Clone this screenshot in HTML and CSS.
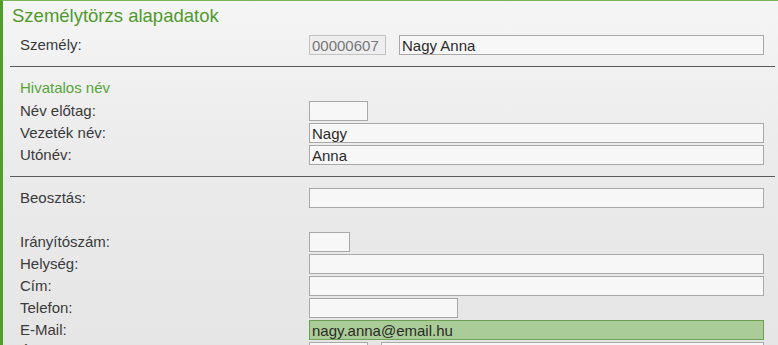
FILE: index.html
```html
<!DOCTYPE html>
<html lang="hu">
<head>
<meta charset="UTF-8">
<title>Személytörzs alapadatok</title>
<link rel="stylesheet" href="styles.css">
</head>
<body>
<div class="panel">
    <h2 class="title">Személytörzs alapadatok</h2>

    <div class="row">
        <label>Személy:</label>
        <div class="fields">
            <input type="text" class="code" value="00000607" disabled>
            <input type="text" class="wide" value="Nagy Anna">
        </div>
    </div>

    <hr>

    <h3 class="subtitle">Hivatalos név</h3>
    <div class="row">
        <label>Név előtag:</label>
        <div class="fields"><input type="text" class="short"></div>
    </div>
    <div class="row">
        <label>Vezeték név:</label>
        <div class="fields"><input type="text" class="wide" value="Nagy"></div>
    </div>
    <div class="row">
        <label>Utónév:</label>
        <div class="fields"><input type="text" class="wide" value="Anna"></div>
    </div>

    <hr>

    <div class="row">
        <label>Beosztás:</label>
        <div class="fields"><input type="text" class="wide"></div>
    </div>
    <div class="row"></div>
    <div class="row">
        <label>Irányítószám:</label>
        <div class="fields"><input type="text" class="zip"></div>
    </div>
    <div class="row">
        <label>Helység:</label>
        <div class="fields"><input type="text" class="wide"></div>
    </div>
    <div class="row">
        <label>Cím:</label>
        <div class="fields"><input type="text" class="wide"></div>
    </div>
    <div class="row">
        <label>Telefon:</label>
        <div class="fields"><input type="text" class="phone"></div>
    </div>
    <div class="row">
        <label>E-Mail:</label>
        <div class="fields"><input type="text" class="wide active" value="nagy.anna@email.hu"></div>
    </div>
    <div class="row">
        <label>Állapot:</label>
        <div class="fields">
            <input type="text" class="short">
            <input type="text" class="wide">
        </div>
    </div>
</div>
</body>
</html>
```

FILE: styles.css
```css
body {
    margin: 0;
    padding: 0;
    font-family: "Liberation Sans", Arial, sans-serif;
    color: #333;
    overflow: hidden;
}
.panel {
    height: 400px;
    border-left: 3px solid #4f9e2c;
    border-top: 1px solid #77b45a;
    background: linear-gradient(to bottom, #f5f5f5 0%, #ebebeb 40%, #e4e4e4 100%);
    padding: 0 14px 0 0;
}
.title {
    margin: 0 0 6px 9px;
    padding-top: 3px;
    font-size: 18.5px;
    line-height: 24px;
    font-weight: normal;
    color: #4f9a2d;
}
.subtitle {
    margin: 0 0 1px 17px;
    font-size: 15px;
    line-height: 22px;
    font-weight: normal;
    color: #5aa437;
}
hr {
    margin: 10px -11px 10px 7px;
    border: none;
    border-top: 1px solid #5c5c5c;
    height: 0;
}
.row {
    display: grid;
    grid-template-columns: 289px 1fr;
    height: 22px;
    padding-left: 17px;
    align-items: center;
}
.row label {
    font-size: 15px;
    line-height: 22px;
    color: #3a3a3a;
}
.fields {
    display: flex;
    gap: 13px;
}
input {
    box-sizing: border-box;
    height: 20px;
    margin: 0;
    padding: 0 2px;
    border: 1px solid #a8a8a8;
    background: #f7f7f7;
    font-family: "Liberation Sans", Arial, sans-serif;
    font-size: 15px;
    color: #2a2a2a;
    outline: none;
}
.wide {
    flex: 1;
    min-width: 0;
}
.code {
    width: 77px;
    border-color: #c2c2c2;
    background: #eeeeee;
    color: #777;
}
.short {
    width: 59px;
}
.zip {
    width: 41px;
}
.phone {
    width: 149px;
}
.active {
    background: #aacc98;
    border-color: #6ea054;
}
```
